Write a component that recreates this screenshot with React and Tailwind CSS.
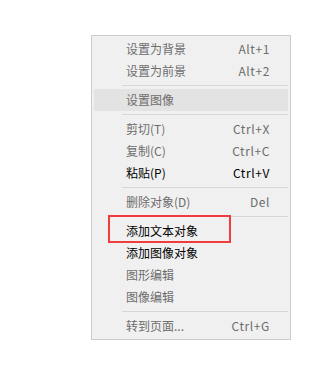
import React from "react";

const items = [
  { t: "设置为背景", k: "Alt+1", d: true },
  { t: "设置为前景", k: "Alt+2", d: true },
  { sep: true },
  { t: "设置图像", d: true, hl: true },
  { sep: true },
  { t: "剪切(T)", k: "Ctrl+X", d: true },
  { t: "复制(C)", k: "Ctrl+C", d: true },
  { t: "粘贴(P)", k: "Ctrl+V", d: false },
  { sep: true },
  { t: "删除对象(D)", k: "Del", d: true },
  { sep: true },
  { t: "添加文本对象", d: false },
  { t: "添加图像对象", d: false },
  { t: "图形编辑", d: true },
  { t: "图像编辑", d: true },
  { sep: true },
  { t: "转到页面...", k: "Ctrl+G", d: true },
];

export default function App() {
  return (
    <div className="w-[325px] h-[374px] bg-white pt-[35px] pl-[91px]" style={{ fontFamily: '"Noto Sans CJK SC", "Liberation Sans", sans-serif' }}>
      <div className="relative w-[200px] border border-[#cccccc] bg-[#f0f0f0] pt-[2px] pb-[2px] text-[12px]">
        {items.map((it, i) =>
          it.sep ? (
            <div key={i} className="h-[7px] flex items-center pl-[30px] pr-[2px]">
              <div className="h-px w-full bg-[#d7d7d7]" />
            </div>
          ) : (
            <div
              key={i}
              className={`mx-[2px] h-[22px] flex items-center justify-between pl-[32px] pr-[18px] leading-[22px] ${it.hl ? "bg-[#e3e3e3]" : ""} ${it.d ? "text-[#6d6d6d]" : "text-black"}`}
            >
              <span>{it.t}</span>
              {it.k && <span className="tracking-[0.6px]">{it.k}</span>}
            </div>
          )
        )}
        <div className="absolute left-[16px] top-[179px] w-[123px] h-[28px] border-2 border-[#f03c3c]" />
      </div>
    </div>
  );
}
